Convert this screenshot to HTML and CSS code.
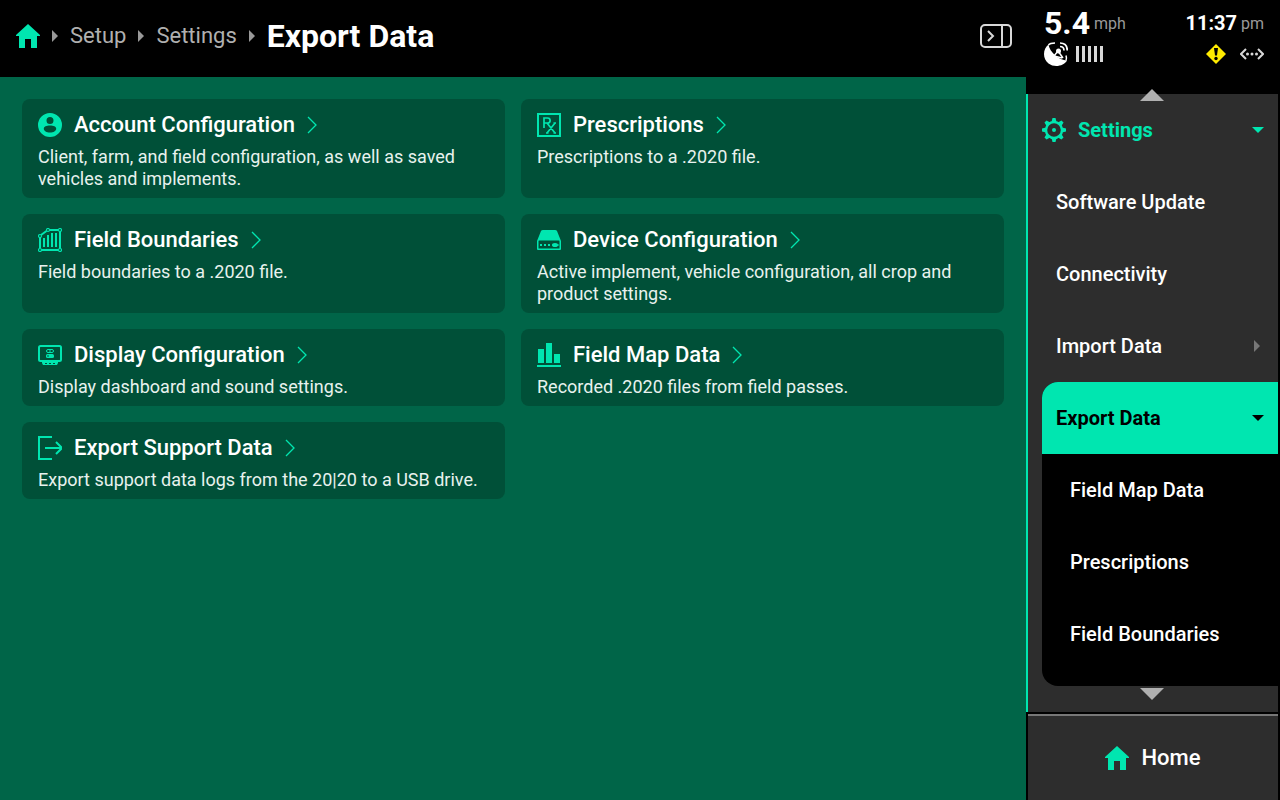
FILE: index.html
```html
<!DOCTYPE html>
<html lang="en">
<head>
  <meta charset="utf-8">
  <meta name="viewport" content="width=device-width, initial-scale=1">
  <title>Export Data</title>
  <link rel="stylesheet" href="styles.css">
</head>
<body>
  <!-- shared icons -->
  <svg class="sprite" aria-hidden="true">
    <symbol id="home" viewBox="0 0 24 24"><path d="M12 0L24 11V12H21V24H15V15H9V24H3V12H0V11Z"/></symbol>
    <symbol id="right" viewBox="0 0 6 12"><path d="M0 0L6 6L0 12Z"/></symbol>
    <symbol id="down" viewBox="0 0 12 6"><path d="M0 0H12L6 6Z"/></symbol>
    <symbol id="chevron" viewBox="0 0 10 18"><path d="M1 1L9 9L1 17" fill="none" stroke="currentColor" stroke-width="1.3"/></symbol>
  </svg>

  <main class="page">
    <header class="header">
      <nav class="breadcrumb" aria-label="Breadcrumb">
        <a class="accent" href="#home" aria-label="Home"><svg class="icon"><use href="#home"/></svg></a>
        <svg class="crumb-arrow"><use href="#right"/></svg>
        <a href="#setup">Setup</a>
        <svg class="crumb-arrow"><use href="#right"/></svg>
        <a href="#settings">Settings</a>
        <svg class="crumb-arrow"><use href="#right"/></svg>
        <h1>Export Data</h1>
      </nav>
      <button class="panel-toggle" type="button" aria-label="Hide side panel">
        <svg width="32" height="24" viewBox="0 0 32 24" fill="none" stroke="#d8d8d8" stroke-width="2">
          <rect x="1" y="1" width="30" height="22" rx="4"/>
          <path d="M22 1V23M8 7L13 12L8 17"/>
        </svg>
      </button>
    </header>

    <div class="cards">
      <a class="card" href="#account">
        <h2>
          <svg class="icon" viewBox="0 0 24 24"><path fill-rule="evenodd" d="M12 0a12 12 0 1 1 0 24a12 12 0 0 1 0-24ZM12 4a3.5 3.5 0 1 0 0 7a3.5 3.5 0 0 0 0-7ZM12 12.5C8.500 12.500 5.800 13.800 5.800 15.500C5.800 18 8.500 19.500 12 19.500C15.500 19.500 18.200 18 18.200 15.500C18.200 13.800 15.500 12.500 12 12.500Z"/></svg>
          Account Configuration
          <svg class="chevron"><use href="#chevron"/></svg>
        </h2>
        <p>Client, farm, and field configuration, as well as saved vehicles and implements.</p>
      </a>
      <a class="card" href="#prescriptions">
        <h2>
          <svg class="icon line" viewBox="0 0 24 24"><path d="M1 1H23V23H1Z"/><path stroke-width="1.7" d="M7 15V5H10.500C14 5 14 10 10.500 10H7M10 10L18 20M18 10L10 20M9 20H11.500M16.500 20H19M16.500 10H19"/></svg>
          Prescriptions
          <svg class="chevron"><use href="#chevron"/></svg>
        </h2>
        <p>Prescriptions to a .2020 file.</p>
      </a>
      <a class="card" href="#boundaries">
        <h2>
          <svg class="icon line" viewBox="0 0 24 24"><path d="M2 9V20M3.500 22H20.500M22 20.500V3.500M20.500 2H11.500M8.500 3L3 7"/><path d="M6 10V19M10 7V19M14 5V19M18 5V19"/><g stroke-width="1.200"><circle cx="2" cy="8" r="1.500"/><circle cx="10" cy="2" r="1.500"/><circle cx="22" cy="2" r="1.500"/><circle cx="2" cy="22" r="1.500"/><circle cx="22" cy="22" r="1.500"/></g></svg>
          Field Boundaries
          <svg class="chevron"><use href="#chevron"/></svg>
        </h2>
        <p>Field boundaries to a .2020 file.</p>
      </a>
      <a class="card" href="#device">
        <h2>
          <svg class="icon" viewBox="0 0 24 24"><path fill-rule="evenodd" d="M6 2H18Q19.500 2 20 3L24 13V21Q24 22 23 22H1Q0 22 0 21V13L4 3Q4.500 2 6 2ZM2 12.500Q1.500 12.500 1.500 13.500V20.500H22.500V13.500Q22.500 12.500 22 12.500Z"/><path d="M3 16h2v2H3ZM7 16h2v2H7ZM11 16h2v2h-2Z"/><ellipse cx="18" cy="17" rx="3" ry="2"/><path d="M15 16.500H22V17.500H15Z"/></svg>
          Device Configuration
          <svg class="chevron"><use href="#chevron"/></svg>
        </h2>
        <p>Active implement, vehicle configuration, all crop and product settings.</p>
      </a>
      <a class="card" href="#display">
        <h2>
          <svg class="icon" viewBox="0 0 24 24"><rect x="1" y="3" width="22" height="15" rx="1.500" fill="none" stroke="currentColor" stroke-width="2"/><path d="M4 19H20V20L19 22H5L4 20Z"/><path d="M7 20.500H9M11 20.500H13M15 20.500H17" stroke="#005038" stroke-width="1"/><rect x="8.500" y="6.500" width="7" height="3" rx="1.500" fill="none" stroke="currentColor"/><path d="M12 6V10" stroke="currentColor"/><rect x="8" y="11" width="8" height="4" rx="1.500"/><path d="M9 13H11" stroke="#005038"/></svg>
          Display Configuration
          <svg class="chevron"><use href="#chevron"/></svg>
        </h2>
        <p>Display dashboard and sound settings.</p>
      </a>
      <a class="card" href="#map-data">
        <h2>
          <svg class="icon" viewBox="0 0 24 24"><path d="M1 6H7V20H1ZM9 0H15V20H9ZM17 11H23V20H17ZM0 22H24V24H0Z"/></svg>
          Field Map Data
          <svg class="chevron"><use href="#chevron"/></svg>
        </h2>
        <p>Recorded .2020 files from field passes.</p>
      </a>
      <a class="card" href="#support">
        <h2>
          <svg class="icon line" viewBox="0 0 24 24"><path d="M14 1H1V23H14M7 12H23M18 6L24 12L18 18"/></svg>
          Export Support Data
          <svg class="chevron"><use href="#chevron"/></svg>
        </h2>
        <p>Export support data logs from the 20|20 to a USB drive.</p>
      </a>
    </div>
  </main>

  <aside class="sidebar">
    <div class="status">
      <div class="status-row">
        <span class="speed">5.4</span>
        <span class="unit">mph</span>
        <span class="time">11:37</span>
        <span class="unit">pm</span>
      </div>
      <div class="status-row">
        <!-- satellite dish -->
        <svg width="24" height="24" viewBox="0 0 24 24" fill="#fff">
          <path d="M4.500 2.500C-1.500 7 -1.500 17 4.500 21.500C10.500 26 20 24 23 18.500C15 18.500 5.500 10 4.500 2.500Z"/>
          <path d="M4.500 3Q6 1 11 1M22 18.500Q23 16.500 22 13.500M10 14L14 9L19 16M10 14L18 16" fill="none" stroke="#fff" stroke-width="1.500"/>
          <circle cx="14.500" cy="9" r="2.500"/>
          <path d="M16 4.500Q20 4.500 20 8.500M16 1Q23.300 1 23.300 8.500" fill="none" stroke="#fff" stroke-width="1.700"/>
        </svg>
        <svg class="signal" width="27" height="16" viewBox="0 0 27 16" fill="#d8d8d8">
          <path d="M0 0h3v16H0ZM6 0h3v16H6ZM12 0h3v16h-3ZM18 0h3v16h-3ZM24 0h3v16h-3Z"/>
        </svg>
        <svg class="warning" width="20" height="20" viewBox="0 0 20 20">
          <path d="M10 0L20 10L10 20L0 10Z" fill="#ffeb00"/>
          <path d="M8 4H12L11 11.500H9Z"/><circle cx="10" cy="14.500" r="1.700"/>
        </svg>
        <svg class="network" width="24" height="12" viewBox="0 0 24 12" fill="#d8d8d8">
          <path d="M6 1L1 6L6 11M18 1L23 6L18 11" fill="none" stroke="#d8d8d8" stroke-width="2"/>
          <circle cx="7.500" cy="6" r="1.500"/><circle cx="12" cy="6" r="1.500"/><circle cx="16.500" cy="6" r="1.500"/>
        </svg>
      </div>
    </div>

    <nav class="menu" aria-label="Settings">
      <button class="scroll scroll-up" type="button" aria-label="Scroll up"><svg viewBox="0 0 24 12"><path d="M0 12L12 0L24 12Z"/></svg></button>
      <a class="menu-item menu-title" href="#settings">
        <svg class="icon" viewBox="0 0 24 24">
          <circle cx="12" cy="12" r="8" fill="none" stroke="currentColor" stroke-width="2.400"/>
          <circle cx="12" cy="12" r="2"/>
          <g id="teeth"><path d="M9.500 4L10.500 0H13.500L14.500 4ZM9.500 20L10.500 24H13.500L14.500 20ZM4 9.500L0 10.500V13.500L4 14.500ZM20 9.500L24 10.500V13.500L20 14.500Z"/></g>
          <use href="#teeth" transform="rotate(45 12 12)"/>
        </svg>
        Settings
        <svg class="caret-down"><use href="#down"/></svg>
      </a>
      <a class="menu-item" href="#update">Software Update</a>
      <a class="menu-item" href="#connectivity">Connectivity</a>
      <a class="menu-item" href="#import">Import Data <svg class="caret-right"><use href="#right"/></svg></a>
      <div class="submenu">
        <a class="menu-item active" href="#export" aria-current="page">Export Data <svg class="caret-down"><use href="#down"/></svg></a>
        <a class="menu-item" href="#map-data">Field Map Data</a>
        <a class="menu-item" href="#prescriptions">Prescriptions</a>
        <a class="menu-item" href="#boundaries">Field Boundaries</a>
      </div>
      <button class="scroll scroll-down" type="button" aria-label="Scroll down"><svg viewBox="0 0 24 12"><path d="M0 0H24L12 12Z"/></svg></button>
    </nav>

    <a class="home-link" href="#home"><svg class="icon accent"><use href="#home"/></svg>Home</a>
  </aside>
</body>
</html>
```
FILE: styles.css
```css
* {
  box-sizing: border-box;
}

body {
  display: flex;
  min-height: 100vh;
  margin: 0;
  background: #000;
  color: #fff;
  font-family: Roboto, "Liberation Sans", sans-serif;
}

a {
  color: inherit;
  text-decoration: none;
}

h1, h2, p {
  margin: 0;
  font-weight: 500;
}

button {
  padding: 0;
  border: 0;
  background: none;
  cursor: pointer;
}

svg {
  display: block;
  flex-shrink: 0;
}

.sprite {
  position: absolute;
  width: 0;
  height: 0;
}

.icon {
  width: 24px;
  height: 24px;
  fill: currentColor;
}

.line {
  fill: none;
  stroke: currentColor;
  stroke-width: 2;
}

.accent {
  color: #00e6b0;
}

/* main area */
.page {
  flex: 1;
  min-width: 0;
  background: #006548;
}

.header {
  display: flex;
  align-items: center;
  justify-content: space-between;
  padding: 14px 14px 19px 16px;
  background: #000;
}

.breadcrumb {
  display: flex;
  align-items: center;
  gap: 12px;
  color: #b0b0b0;
  font-size: 22px;
  line-height: 44px;
}

.breadcrumb h1 {
  color: #fff;
  font-size: 32px;
  font-weight: 700;
}

.crumb-arrow {
  width: 6px;
  height: 12px;
  fill: #999;
}

.cards {
  display: grid;
  grid-template-columns: 1fr 1fr;
  gap: 16px;
  padding: 22px;
}

.card {
  padding: 10px 16px 8px;
  border-radius: 8px;
  background: #005038;
}

.card h2 {
  display: flex;
  align-items: center;
  gap: 12px;
  margin-bottom: 5px;
  font-size: 22px;
  line-height: 32px;
}

.card .icon,
.chevron {
  color: #00e6b0;
}

.card p {
  color: #e8f2ee;
  font-size: 18px;
  font-weight: 400;
  line-height: 22px;
}

.chevron {
  width: 10px;
  height: 18px;
}

/* right panel */
.sidebar {
  display: flex;
  flex-direction: column;
  width: 254px;
  padding-right: 2px;
}

.status {
  padding: 4px 14px 28px 18px;
}

.status-row {
  display: flex;
  align-items: center;
}

.speed {
  margin-right: 4px;
  font-size: 32px;
  font-weight: 700;
  line-height: 38px;
}

.unit {
  color: #999;
  font-size: 16px;
}

.time {
  margin-left: auto;
  margin-right: 4px;
  font-size: 20px;
  font-weight: 700;
}

.signal {
  margin-left: 8px;
}

.warning {
  margin-left: auto;
}

.network {
  margin-left: 14px;
}

.menu {
  position: relative;
  flex: 1;
  margin-bottom: 2px;
  border-left: 2px solid #00e6b0;
  background: #2d2d2d;
}

.menu-item {
  display: flex;
  align-items: center;
  padding: 0 14px 0 28px;
  font-size: 20px;
  font-weight: 500;
  line-height: 72px;
}

.menu-title {
  gap: 12px;
  padding-left: 14px;
  color: #00e6b0;
  font-weight: 700;
}

.caret-down {
  width: 12px;
  height: 6px;
  margin-left: auto;
  fill: currentColor;
}

.caret-right {
  width: 6px;
  height: 12px;
  margin-left: auto;
  margin-right: 4px;
  fill: #777;
}

.submenu {
  margin-left: 14px;
  padding-bottom: 16px;
  border-radius: 16px 0 0 16px;
  background: #000;
  overflow: hidden;
}

.active {
  padding-left: 14px;
  background: #00e6b0;
  color: #000;
  font-weight: 700;
}

.scroll {
  position: absolute;
  left: 50%;
  width: 24px;
  height: 12px;
  margin-left: -13px;
  fill: #b0b0b0;
}

.scroll-up {
  top: -5px;
}

.scroll-down {
  bottom: 12px;
}

.home-link {
  display: flex;
  align-items: center;
  justify-content: center;
  gap: 12px;
  margin-left: 2px;
  border-top: 2px solid #777;
  background: #2d2d2d;
  font-size: 22px;
  font-weight: 500;
  line-height: 84px;
}
```
